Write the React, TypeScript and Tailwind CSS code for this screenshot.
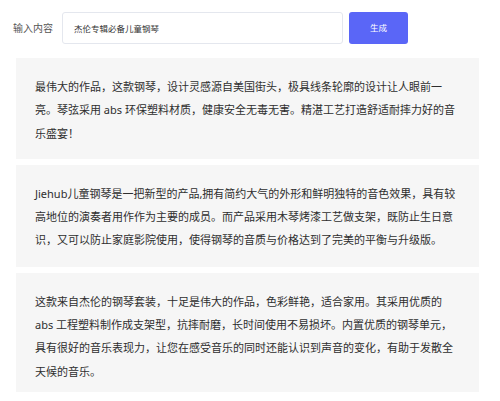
import { useState } from 'react'

const paragraphs = [
  {
    text: '最伟大的作品，这款钢琴，设计灵感源自美国街头，极具线条轮廓的设计让人眼前一亮。琴弦采用 abs 环保塑料材质，健康安全无毒无害。精湛工艺打造舒适耐摔力好的音乐盛宴！',
    pb: 'pb-[14px]',
  },
  {
    text: 'Jiehub儿童钢琴是一把新型的产品,拥有简约大气的外形和鲜明独特的音色效果，具有较高地位的演奏者用作作为主要的成员。而产品采用木琴烤漆工艺做支架，既防止生日意识，又可以防止家庭影院使用，使得钢琴的音质与价格达到了完美的平衡与升级版。',
    pb: 'pb-[15px]',
  },
  {
    text: '这款来自杰伦的钢琴套装，十足是伟大的作品，色彩鲜艳，适合家用。其采用优质的 abs 工程塑料制作成支架型，抗摔耐磨，长时间使用不易损坏。内置优质的钢琴单元，具有很好的音乐表现力，让您在感受音乐的同时还能认识到声音的变化，有助于发散全天候的音乐。',
    pb: 'pb-[9px]',
  },
]

export default function App() {
  const [value, setValue] = useState('杰伦专辑必备儿童钢琴')

  return (
    <div
      className="w-[500px] h-[401px] overflow-hidden bg-white"
      style={{ fontFamily: '"Noto Sans", "Noto Sans CJK SC", sans-serif' }}
    >
      {/* Input row */}
      <div className="flex items-center pt-[12px] pl-[13px]">
        <span className="w-[40px] text-[10px] text-[#555]">输入内容</span>
        <input
          value={value}
          onChange={(e) => setValue(e.target.value)}
          className="ml-[9px] h-[32px] w-[281px] rounded-[3px] border border-[#e4e7ee] px-[11px] text-[8.5px] text-[#333] outline-none"
        />
        <button className="ml-[6px] h-[32px] w-[59px] rounded-[3px] bg-[#5a66f7] text-[8.5px] text-white">
          生成
        </button>
      </div>

      {/* Generated results */}
      <div className="mt-[14px] ml-[16px] flex w-[463px] flex-col gap-[6px]">
        {paragraphs.map((p, i) => (
          <div key={i} className={`bg-[#f6f6f6] px-[19px] pt-[17px] ${p.pb}`}>
            <p className="text-[11px] leading-[23.3px] text-[#2e2e2e]">{p.text}</p>
          </div>
        ))}
      </div>
    </div>
  )
}
